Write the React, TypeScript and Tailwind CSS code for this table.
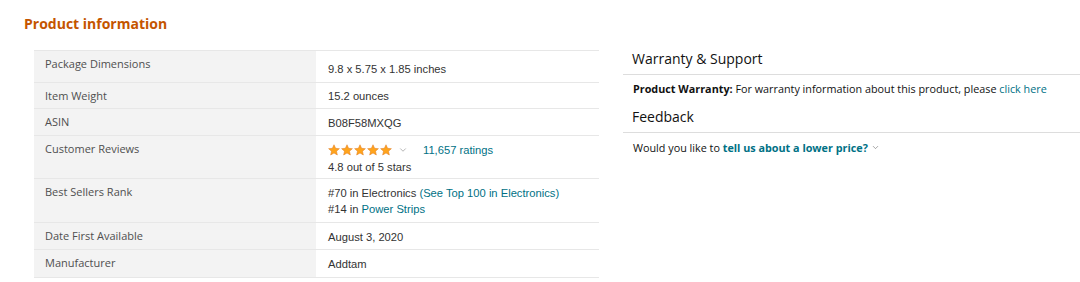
import { ChevronDown } from 'lucide-react';

const label = "font-['Open_Sans',sans-serif] text-[11px] text-[#4f4f4f]";
const value = "font-['Liberation_Sans',Arial,sans-serif] text-[11.2px] text-[#333]";
const link = 'text-[#007185]';

// a single orange star for the rating cell
const Star = () => (
  <svg width="12" height="12" viewBox="0 0 24 24" className="shrink-0">
    <path
      d="M12 1.5l3.2 7.1 7.6.7-5.8 5.1 1.7 7.6L12 18l-6.7 4 1.7-7.6-5.8-5.1 7.6-.7z"
      fill="#ffa41c"
      stroke="#de7921"
      strokeWidth="1"
    />
  </svg>
);

type Row = { name: string; rowClass: string; cellClass: string; content: React.ReactNode };

const rows: Row[] = [
  {
    name: 'Package Dimensions',
    rowClass: 'h-[32px]',
    cellClass: 'pt-[10px]',
    content: '9.8 x 5.75 x 1.85 inches',
  },
  { name: 'Item Weight', rowClass: 'h-[26px]', cellClass: 'pt-[5px]', content: '15.2 ounces' },
  { name: 'ASIN', rowClass: 'h-[27px]', cellClass: 'pt-[6px]', content: 'B08F58MXQG' },
  {
    name: 'Customer Reviews',
    rowClass: 'h-[43px]',
    cellClass: 'pt-[6px]',
    content: (
      <div>
        <div className="flex items-center">
          <div className="flex gap-[1px]">
            <Star />
            <Star />
            <Star />
            <Star />
            <Star />
          </div>
          <ChevronDown size={10} strokeWidth={1.5} className="ml-[6px] text-[#888]" />
          <span className={`ml-[15px] ${link}`}>11,657 ratings</span>
        </div>
        <div className="mt-[1px]">4.8 out of 5 stars</div>
      </div>
    ),
  },
  {
    name: 'Best Sellers Rank',
    rowClass: 'h-[44px]',
    cellClass: 'pt-[6px]',
    content: (
      <div className="leading-[16px]">
        <div>
          #70 in Electronics <span className={link}>(See Top 100 in Electronics)</span>
        </div>
        <div>
          #14 in <span className={link}>Power Strips</span>
        </div>
      </div>
    ),
  },
  { name: 'Date First Available', rowClass: 'h-[27px]', cellClass: 'pt-[6px]', content: 'August 3, 2020' },
  { name: 'Manufacturer', rowClass: 'h-[28px]', cellClass: 'pt-[6px]', content: 'Addtam' },
];

export default function App() {
  return (
    <div className="w-[1080px] h-[282px] bg-white flex overflow-hidden">
      <div className="w-[623px] shrink-0 pl-[24px] pt-[14px]">
        <h2 className="font-['Open_Sans',sans-serif] font-bold text-[14px] leading-[20px] text-[#c45500]">
          Product information
        </h2>
        <div className="ml-[10px] mt-[16px] w-[565px] border-t border-[#e7e7e7]">
          {rows.map(r => (
            <div key={r.name} className={`flex border-b border-[#e7e7e7] ${r.rowClass}`}>
              <div className={`w-[282px] shrink-0 bg-[#f3f3f3] pl-[11px] pt-[5px] leading-[16px] ${label}`}>
                {r.name}
              </div>
              <div className={`flex-1 pl-[12px] leading-[16px] ${r.cellClass} ${value}`}>{r.content}</div>
            </div>
          ))}
        </div>
      </div>

      <div className="flex-1 pt-[49px]">
        <h3 className="pl-[9px] pb-[5px] font-['Open_Sans',sans-serif] text-[14px] leading-[20px] text-[#111] border-b border-[#ddd]">
          Warranty &amp; Support
        </h3>
        <p className="pl-[10px] pt-[6px] font-['Open_Sans',sans-serif] text-[10.8px] leading-[15px] text-[#111]">
          <span className="font-bold">Product Warranty:</span> For warranty information about this product, please{' '}
          <span className={link}>click here</span>
        </p>
        <h3 className="pl-[9px] pt-[11px] pb-[5px] font-['Open_Sans',sans-serif] text-[14px] leading-[20px] text-[#111] border-b border-[#ddd]">
          Feedback
        </h3>
        <p className="pl-[10px] pt-[7px] flex items-center font-['Open_Sans',sans-serif] text-[10.8px] leading-[15px] text-[#111]">
          Would you like to&nbsp;<span className={`font-bold ${link}`}>tell us about a lower price?</span>
          <ChevronDown size={9} strokeWidth={1.5} className="ml-[3px] text-[#666]" />
        </p>
      </div>
    </div>
  );
}
